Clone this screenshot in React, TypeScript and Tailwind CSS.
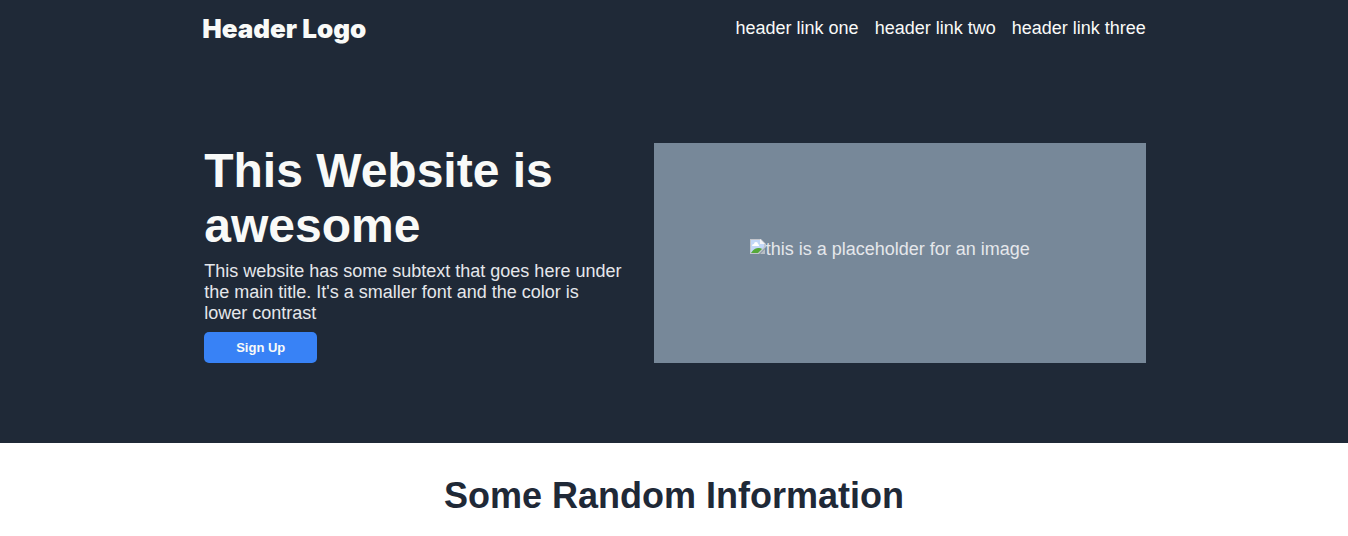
const links = ["header link one", "header link two", "header link three"];

function BrokenImageIcon() {
  return (
    <svg width="16" height="16" viewBox="0 0 16 16" className="shrink-0" aria-hidden="true">
      <path d="M0 0h11l5 5v3l-7 7H0z" fill="#c4c6cc" />
      <path d="M1 1h9v4h4v3l-6 6H1z" fill="#c3d8f8" />
      <path d="M2 7a2 2 0 0 1 2-2 2 2 0 0 1 4 0 2 2 0 0 1 1 2z" fill="#fff" />
      <path d="M1 14c1-2 4-5 7-5 2 0 3 0 4 1l-4 4z" fill="#56a83a" />
      <path d="M10 0l5 5h-5z" fill="#f4f4f7" />
      <path d="M15 10v5h-5z" fill="#b9bdc4" />
    </svg>
  );
}

export default function App() {
  return (
    <div className="min-h-screen bg-white font-['Liberation_Sans',Arial,sans-serif] text-lg/[21px]">
      <div className="bg-[#1f2937]">
        <header className="mx-auto flex w-[70%] items-start justify-between pt-3.5">
          <div className="font-['Inter',sans-serif] text-[26px]/[30px] font-black text-[#f9faf8]">Header Logo</div>
          <nav className="pt-1">
            <ul className="flex gap-4">
              {links.map((label) => (
                <li key={label}>
                  <a href="#" className="text-[#f9faf8]">{label}</a>
                </li>
              ))}
            </ul>
          </nav>
        </header>
        <main className="mx-auto flex w-[70%] gap-8 pt-[99px] pb-20 pl-0.5">
          <section className="flex flex-1 flex-col items-start gap-2">
            <h1 className="text-5xl/[55px] font-bold text-[#f9faf8]">This Website is awesome</h1>
            <p className="text-[#e5e7eb]">
              This website has some subtext that goes here under the main title. It's a smaller font and the color is lower contrast
            </p>
            <button type="button" className="rounded-[5px] bg-[#3882f6] px-8 py-2 text-[13px]/[15px] font-bold text-[#f9faf8]">
              Sign Up
            </button>
          </section>
          <div className="flex w-[492px] items-center justify-center bg-[#778899] pr-5 pb-2 text-[#e5e7eb]">
            <div className="flex items-start">
              <BrokenImageIcon />
              <span>this is a placeholder for an image</span>
            </div>
          </div>
        </main>
      </div>
      <section className="px-4 py-8 text-center">
        <h2 className="text-4xl/[41px] font-bold text-[#1f2937]">Some Random Information</h2>
      </section>
    </div>
  );
}
